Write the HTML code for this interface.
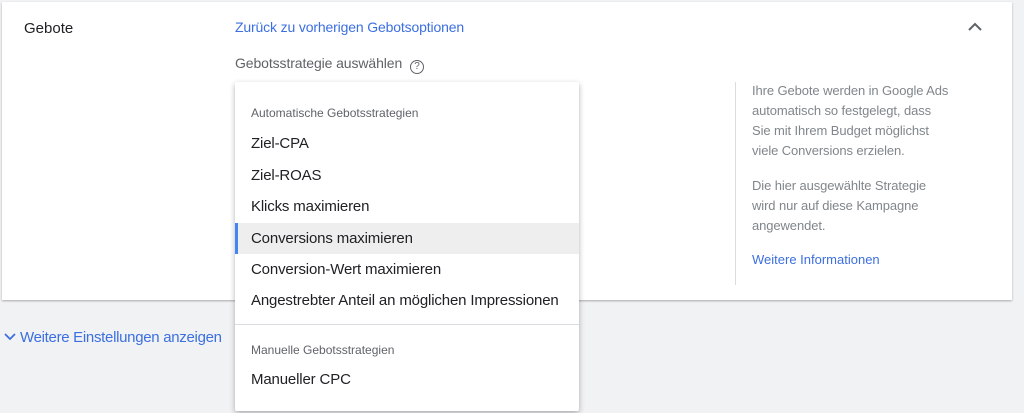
<!DOCTYPE html><html><head><style>
body{margin:0;width:1024px;height:413px;background:#f1f2f4;font-family:"Liberation Sans",sans-serif;position:relative;overflow:hidden}
.card{position:absolute;left:2px;top:2px;width:1010px;height:298px;background:#fff;box-shadow:0 1px 2px rgba(0,0,0,.3)}
.t{position:absolute;white-space:nowrap}
.menu{position:absolute;left:235px;top:82px;width:344px;height:329px;background:#fff;box-shadow:0 2px 6px rgba(0,0,0,.3);border-radius:2px}
.it{position:absolute;left:0;width:344px;height:31px;line-height:31px;padding-left:16px;box-sizing:border-box;font-size:15px;color:#202124;letter-spacing:-0.15px}
.hd{position:absolute;left:16px;font-size:12px;color:#5f6368}
.side{font-size:13px;color:#80868b;line-height:20px;letter-spacing:-0.1px}
</style></head><body>
<div class="card">
<div class="t" style="left:22px;top:18px;font-size:15px;color:#202124">Gebote</div>
<div class="t" style="left:233px;top:17px;font-size:14px;color:#3c6fe0;letter-spacing:-0.15px">Zurück zu vorherigen Gebotsoptionen</div>
<div class="t" style="left:233px;top:53px;font-size:14px;color:#5f6368;letter-spacing:-0.1px">Gebotsstrategie auswählen <span style="display:inline-block;width:12px;height:12px;border:1.3px solid #5f6368;border-radius:50%;font-size:10px;line-height:12px;text-align:center;margin-left:4px;vertical-align:-1px">?</span></div>
<svg class="t" style="left:966px;top:20px" width="14" height="10"><path d="M1 8 L7 2 L13 8" fill="none" stroke="#5f6368" stroke-width="2"/></svg>
<div style="position:absolute;left:733px;top:80px;width:1px;height:203px;background:#dadce0"></div>
<div class="t side" style="left:750px;top:79px">Ihre Gebote werden in Google Ads<br>automatisch so festgelegt, dass<br>Sie mit Ihrem Budget möglichst<br>viele Conversions erzielen.</div>
<div class="t side" style="left:750px;top:174px">Die hier ausgewählte Strategie<br>wird nur auf diese Kampagne<br>angewendet.</div>
<div class="t" style="left:750px;top:250px;font-size:13px;color:#3c6fe0">Weitere Informationen</div>
</div>
<svg class="t" style="left:4px;top:333px" width="12" height="8"><path d="M1 1 L6 6 L11 1" fill="none" stroke="#3c6fe0" stroke-width="1.8"/></svg>
<div class="t" style="left:20px;top:329px;font-size:15px;color:#3c6fe0;letter-spacing:-0.3px">Weitere Einstellungen anzeigen</div>
<div class="menu">
<div class="hd" style="top:24px">Automatische Gebotsstrategien</div>
<div class="it" style="top:46px">Ziel-CPA</div>
<div class="it" style="top:78px">Ziel-ROAS</div>
<div class="it" style="top:109px">Klicks maximieren</div>
<div class="it" style="top:141px;background:#eeeeee;border-left:3px solid #4285f4;padding-left:13px">Conversions maximieren</div>
<div class="it" style="top:172px">Conversion-Wert maximieren</div>
<div class="it" style="top:203px">Angestrebter Anteil an möglichen Impressionen</div>
<div style="position:absolute;left:0;top:242px;width:344px;height:1px;background:#dadce0"></div>
<div class="hd" style="top:261px">Manuelle Gebotsstrategien</div>
<div class="it" style="top:282px">Manueller CPC</div>
</div>
</body></html>
